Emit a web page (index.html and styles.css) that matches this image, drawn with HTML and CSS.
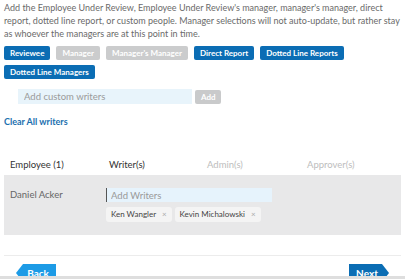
FILE: index.html
```html
<!DOCTYPE html>
<html lang="en">
<head>
    <meta charset="UTF-8">
    <meta name="viewport" content="width=device-width, initial-scale=1.0">
    <title>Writers</title>
    <link rel="stylesheet" href="styles.css">
</head>
<body>
    <div class="page">
        <p class="intro">Add the Employee Under Review, Employee Under Review's manager, manager's manager, direct report, dotted line report, or custom people. Manager selections will not auto-update, but rather stay as whoever the managers are at this point in time.</p>
        <div class="roles">
            <button class="role">Reviewee</button>
            <button class="role off">Manager</button>
            <button class="role off">Manager's Manager</button>
            <button class="role">Direct Report</button>
            <button class="role">Dotted Line Reports</button>
            <button class="role">Dotted Line Managers</button>
        </div>
        <div class="custom">
            <input type="text" id="custom-input" placeholder="Add custom writers">
            <button id="custom-add">Add</button>
        </div>
        <a class="clear" href="#">Clear All writers</a>

        <div class="table">
            <div class="thead">
                <span class="th">Employee (1)</span>
                <span class="th">Writer(s)</span>
                <span class="th muted">Admin(s)</span>
                <span class="th muted">Approver(s)</span>
            </div>
            <div class="trow">
                <span class="name">Daniel Acker</span>
                <div class="writers">
                    <input type="text" class="writer-input" placeholder="Add Writers">
                    <div class="tags">
                        <span class="tag">Ken Wangler <span class="x">&times;</span></span>
                        <span class="tag">Kevin Michalowski <span class="x">&times;</span></span>
                    </div>
                </div>
            </div>
        </div>

        <div class="footer">
            <button class="nav back">Back</button>
            <button class="nav next">Next</button>
        </div>
    </div>
    <div class="strip"></div>
</body>
</html>
```

FILE: styles.css
```css
body {
    font-family: Lato, "Open Sans", sans-serif;
    background-color: #fff;
    margin: 0;
    height: 279px;
    overflow: hidden;
}

.page {
    height: 276px;
    overflow: hidden;
    padding: 0 4px;
    box-sizing: border-box;
}

.intro {
    margin: 0;
    padding-top: 1px;
    font-size: 9px;
    line-height: 13px;
    color: #6a6a6a;
}

.roles {
    display: flex;
    flex-wrap: wrap;
    gap: 5px 6px;
    margin-top: 6px;
    width: 340px;
}

.role {
    height: 14px;
    padding: 0 6px;
    border: none;
    border-radius: 2px;
    background-color: #0b6db4;
    color: #fff;
    font-family: inherit;
    font-size: 8px;
    font-weight: bold;
    line-height: 14px;
}

.role.off {
    background-color: #cbcccd;
}

.custom {
    display: flex;
    gap: 3px;
    margin: 10px 0 0 14px;
}

#custom-input {
    width: 174px;
    height: 15px;
    box-sizing: border-box;
    padding: 0 6px;
    border: none;
    background-color: #e8f4fb;
    font-family: inherit;
    font-size: 9.5px;
}

#custom-input::placeholder {
    color: #9a9a9a;
}

#custom-add {
    width: 26px;
    height: 14px;
    margin-top: 1px;
    border: none;
    border-radius: 2px;
    background-color: #c9cacb;
    color: #fff;
    font-family: inherit;
    font-size: 8px;
    font-weight: bold;
}

.clear {
    display: block;
    margin-top: 12px;
    font-size: 9px;
    font-weight: bold;
    color: #1b6fae;
    text-decoration: none;
}

.table {
    margin-top: 32px;
}

.thead {
    display: grid;
    grid-template-columns: 99px 98px 100px 1fr;
    padding: 0 6px 4px;
    line-height: 12px;
    font-size: 9.5px;
    color: #333;
}

.th.muted {
    color: #bdbdbd;
}

.trow {
    display: grid;
    grid-template-columns: 96px 1fr;
    padding: 13px 6px;
    background-color: #e8e8e9;
}

.name {
    font-size: 9.5px;
    color: #666;
    padding-top: 1px;
}

.writers {
    width: 166px;
}

.writer-input {
    display: block;
    width: 166px;
    height: 14px;
    box-sizing: border-box;
    padding: 0 4px;
    border: none;
    border-left: 1px solid #555;
    background-color: #e6f3fc;
    font-family: inherit;
    font-size: 9.5px;
}

.writer-input::placeholder {
    color: #999;
}

.tags {
    display: flex;
    gap: 3px;
    margin-top: 5px;
    white-space: nowrap;
}

.tag {
    height: 15px;
    line-height: 15px;
    padding: 0 5px;
    border-radius: 3px;
    background-color: #f4f4f4;
    font-size: 8px;
    color: #444;
}

.tag .x {
    margin-left: 4px;
    color: #aaa;
}

.footer {
    display: flex;
    justify-content: space-between;
    margin-top: 20px;
    padding: 8px 12px 0 12px;
    border-top: 1px solid #ececec;
}

.nav {
    width: 40px;
    height: 18px;
    border: none;
    color: #fff;
    font-family: inherit;
    font-size: 10px;
    font-weight: bold;
}

.back {
    background-color: #1d9be6;
    clip-path: polygon(7px 0, 100% 0, 100% 100%, 7px 100%, 0 50%);
    padding-left: 10px;
}

.next {
    background-color: #0b6db4;
    clip-path: polygon(0 0, calc(100% - 7px) 0, 100% 50%, calc(100% - 7px) 100%, 0 100%);
    padding-right: 10px;
}

.strip {
    height: 3px;
    background-color: #dedede;
}
```
